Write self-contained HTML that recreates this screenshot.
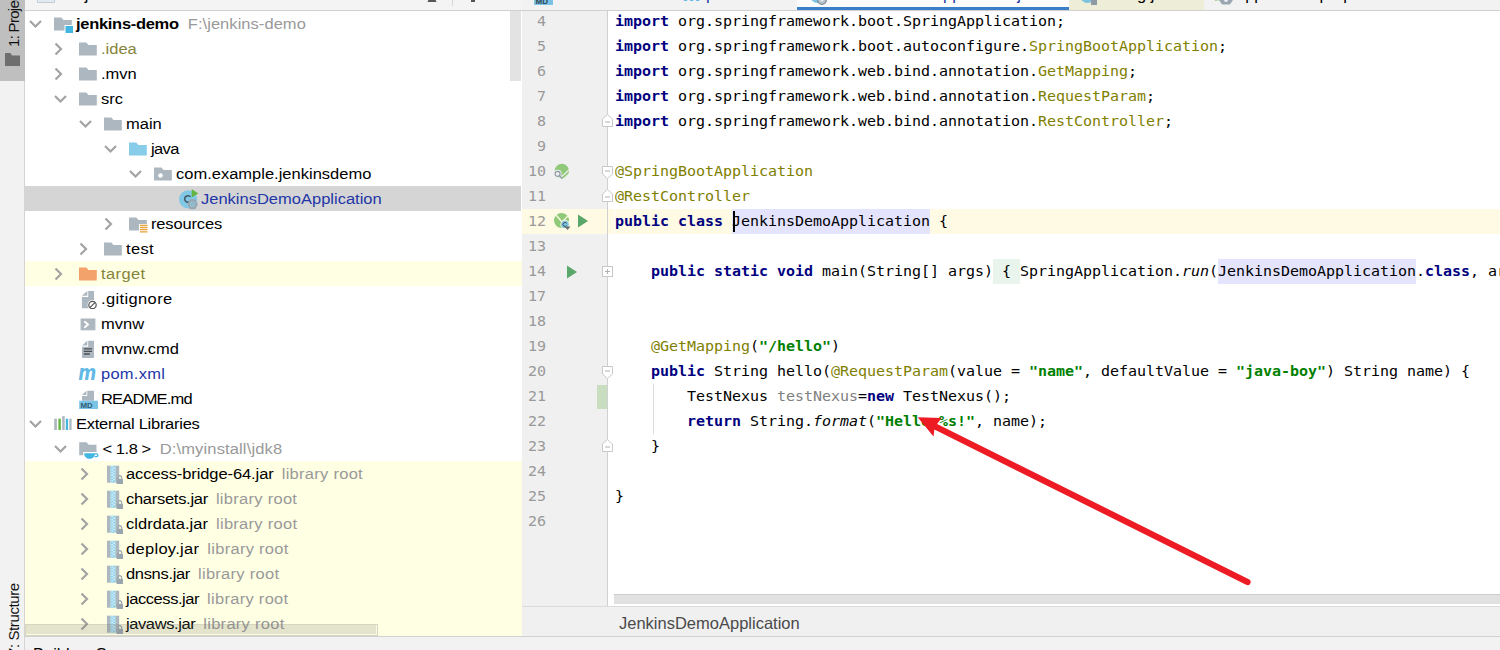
<!DOCTYPE html>
<html><head><meta charset="utf-8"><title>jenkins-demo</title>
<style>
html,body{margin:0;padding:0}
body{width:1500px;height:650px;overflow:hidden;position:relative;background:#f2f2f2;font-family:"Liberation Sans","Noto Sans CJK SC",sans-serif;font-size:16.5px;color:#000}
div,span{box-sizing:border-box}
#strip{position:absolute;left:0;top:0;width:25px;height:650px;background:#f2f2f2;border-right:1px solid #d4d4d4}
#strip .on{position:absolute;left:0;top:0;width:25px;height:81px;background:#bfbfbf}
.vt{position:absolute;transform-origin:0 0;transform:rotate(-90deg);white-space:nowrap;font-size:15px;line-height:24px;height:24px;color:#111}
#tree{position:absolute;left:25px;top:0;width:497px;height:637px;background:#fff;overflow:hidden}
#treehead{position:absolute;left:0;top:0;width:498px;height:11px;background:#f4f4f4;border-bottom:1px solid #d0d0d0}
.row{position:absolute;left:0;width:496px;height:25px;white-space:nowrap}
.row.sel{background:#d5d5d5}
.row.ex{background:#ffffe4;width:497px}
.row.lib{background:#ffffe4;width:497px}
.row span.a,.row span.i,.row span.t{position:absolute;top:0;height:25px;line-height:25px}
.row span.t{transform:scaleY(0.930);transform-origin:0 18px}
.row span.a svg,.row span.i svg{position:absolute;left:0;top:50%;transform:translateY(-50%)}
.g{color:#999}
.ol{color:#84843c}
.bl{color:#2236a8}
#editor{position:absolute;left:522px;top:0;width:978px;height:637px;background:#fff;overflow:hidden}
#tabs{position:absolute;left:522px;top:0;width:978px;height:11px;background:#f2f2f2;border-bottom:1px solid #d0d0d0;z-index:3}
#gutter{position:absolute;left:0;top:10px;width:86px;height:596px;background:#f0f0f0;border-right:1px solid #d0d0d0}
.ln{position:absolute;left:522px;width:85px;height:25px;line-height:25px;font-family:"DejaVu Sans Mono","Liberation Mono",monospace;font-size:15px;color:#999}
.ln span{position:absolute;right:61px;transform:scaleY(0.900);transform-origin:0 17px}
.cl .tx{display:block;transform:scaleY(0.900);transform-origin:0 17px}
.bg{position:absolute;height:25px}
.ln.cur{background:#fffae3}
.cl{position:absolute;left:608px;width:892px;height:25px;line-height:25px;padding-left:7px;white-space:pre;font-family:"DejaVu Sans Mono","Liberation Mono",monospace;font-size:15px;letter-spacing:-0.031px;color:#000;overflow:hidden}
.cl.cur{background:#fffae3}
.cl.cur ~ .cl.cur{background:transparent}
.k{color:#000080;font-weight:bold}
.an{color:#808000}
.s{color:#008000;font-weight:bold}
.un{color:#808080}
.hl{background:#e4e4ff;display:inline-block;height:25px}
.fold{background:#e9f5ec;display:inline-block;height:25px}
.fd{position:absolute}
.tab{position:absolute;top:-15.900px;height:20px;line-height:20px;white-space:nowrap;font-size:16.500px}
#tabs{overflow:hidden}
#hscroll{position:absolute;left:614px;top:594px;width:886px;height:10px;background:#e1e1e1;border-top:1px solid #cdcdcd}
#crumbs{position:absolute;left:522px;top:606px;width:978px;height:31px;background:#f0f0f0;border-top:1px solid #dcdcdc;border-bottom:1px solid #d1d1d1;line-height:32px;font-size:16.500px;color:#4a4a4a}
#bottom{position:absolute;left:25px;top:637px;width:1475px;height:13px;background:#f2f2f2;overflow:hidden}
</style></head><body>
<div id="strip"><div class="on"></div>
<div class="vt" style="left:2px;top:47px;letter-spacing:-0.700px">1: Project</div>
<svg style="position:absolute;left:5px;top:52px" width="15" height="14" viewBox="0 0 15 14"><path d="M0 1h5.500l1.500 2.500H15V14H0z" fill="#6e6e6e"/></svg>
<div class="vt" style="left:1.500px;top:655.500px;letter-spacing:-0.400px">7: Structure</div>
</div>
<div id="tree">
<div class="row " style="top:11px"><span class="a" style="left:3.5px"><svg class="ar" width="13" height="9" viewBox="0 0 13 9"><path d="M1 1.500l5.500 5.500 5.500-5.500" fill="none" stroke="#a3a3a3" stroke-width="2.200"/></svg></span><span class="i" style="left:28px"><svg class="ic" width="20" height="18" viewBox="0 0 20 18"><path d="M1 2.500h7.300l2.200 2.500H18.800v10.500H1z" fill="#adb7bf"/><rect x="11.500" y="10" width="8.500" height="8" fill="#fff"/><rect x="12.500" y="11" width="7.500" height="7" fill="#40b6e0"/></svg></span><span class="t" style="left:51px"><b style="letter-spacing:-0.300px">jenkins-demo</b><span class="g" style="margin-left:9px;letter-spacing:0.050px">F:\jenkins-demo</span></span></div>
<div class="row " style="top:36px"><span class="a" style="left:28px"><svg class="ar" width="12" height="13" viewBox="0 0 12 13"><path d="M2.500 1l5.500 5.500-5.500 5.500" fill="none" stroke="#a3a3a3" stroke-width="2.200"/></svg></span><span class="i" style="left:53px"><svg class="ic" width="20" height="18" viewBox="0 0 20 18"><path d="M1 2.500h7.300l2.200 2.500H18.800v10.500H1z" fill="#adb7bf"/></svg></span><span class="t" style="left:76px"><span class="ol">.idea</span></span></div>
<div class="row " style="top:61px"><span class="a" style="left:28px"><svg class="ar" width="12" height="13" viewBox="0 0 12 13"><path d="M2.500 1l5.500 5.500-5.500 5.500" fill="none" stroke="#a3a3a3" stroke-width="2.200"/></svg></span><span class="i" style="left:53px"><svg class="ic" width="20" height="18" viewBox="0 0 20 18"><path d="M1 2.500h7.300l2.200 2.500H18.800v10.500H1z" fill="#adb7bf"/></svg></span><span class="t" style="left:76px">.mvn</span></div>
<div class="row " style="top:86px"><span class="a" style="left:28.5px"><svg class="ar" width="13" height="9" viewBox="0 0 13 9"><path d="M1 1.500l5.500 5.500 5.500-5.500" fill="none" stroke="#a3a3a3" stroke-width="2.200"/></svg></span><span class="i" style="left:53px"><svg class="ic" width="20" height="18" viewBox="0 0 20 18"><path d="M1 2.500h7.300l2.200 2.500H18.800v10.500H1z" fill="#adb7bf"/></svg></span><span class="t" style="left:76px">src</span></div>
<div class="row " style="top:111px"><span class="a" style="left:53.5px"><svg class="ar" width="13" height="9" viewBox="0 0 13 9"><path d="M1 1.500l5.500 5.500 5.500-5.500" fill="none" stroke="#a3a3a3" stroke-width="2.200"/></svg></span><span class="i" style="left:78px"><svg class="ic" width="20" height="18" viewBox="0 0 20 18"><path d="M1 2.500h7.300l2.200 2.500H18.800v10.500H1z" fill="#adb7bf"/></svg></span><span class="t" style="left:101px">main</span></div>
<div class="row " style="top:136px"><span class="a" style="left:78.5px"><svg class="ar" width="13" height="9" viewBox="0 0 13 9"><path d="M1 1.500l5.500 5.500 5.500-5.500" fill="none" stroke="#a3a3a3" stroke-width="2.200"/></svg></span><span class="i" style="left:103px"><svg class="ic" width="20" height="18" viewBox="0 0 20 18"><path d="M1 2.500h7.300l2.200 2.500H18.800v10.500H1z" fill="#87cde9"/></svg></span><span class="t" style="left:126px"><span style="letter-spacing:-0.650px">java</span></span></div>
<div class="row " style="top:161px"><span class="a" style="left:103.5px"><svg class="ar" width="13" height="9" viewBox="0 0 13 9"><path d="M1 1.500l5.500 5.500 5.500-5.500" fill="none" stroke="#a3a3a3" stroke-width="2.200"/></svg></span><span class="i" style="left:128px"><svg class="ic" width="20" height="18" viewBox="0 0 20 18"><path d="M1 2.500h7.300l2.200 2.500H18.800v10.500H1z" fill="#adb7bf"/><circle cx="7.500" cy="10.500" r="2.300" fill="#fff"/></svg></span><span class="t" style="left:151px">com.example.jenkinsdemo</span></div>
<div class="row sel" style="top:186px"><span class="i" style="left:154px"><svg class="ic" width="20" height="22" viewBox="0 0 20 22"><circle cx="9.1" cy="11.4" r="9.1" fill="#80c8e6"/><path d="M11.53 8.88A3.3 3.3 0 1 0 11.53 13.12" fill="none" stroke="#3f5661" stroke-width="1.5"/><path d="M12.7 1L19.3 5.6L12.7 9.6z" fill="#62b543"/><path d="M8.3 16.3L10.95 11.35H16.25L18.9 16.3L16.25 21.25H10.95z" fill="#9aa7b0"/><circle cx="13.6" cy="16.3" r="2.8" fill="#8ec9e2"/><path d="M12.5 15.3a1.600 1.600 0 1 0 2.200 0" fill="none" stroke="#9aa7b0" stroke-width="1"/><path d="M13.6 14.200v2" stroke="#9aa7b0" stroke-width="1"/></svg></span><span class="t" style="left:176px"><span class="bl">JenkinsDemoApplication</span></span></div>
<div class="row " style="top:211px"><span class="a" style="left:78px"><svg class="ar" width="12" height="13" viewBox="0 0 12 13"><path d="M2.500 1l5.500 5.500-5.500 5.500" fill="none" stroke="#a3a3a3" stroke-width="2.200"/></svg></span><span class="i" style="left:103px"><svg class="ic" width="20" height="18" viewBox="0 0 20 18"><path d="M1 2.500h7.300l2.200 2.500H18.800v10.500H1z" fill="#adb7bf"/><rect x="11" y="9" width="9" height="9" fill="#fff"/><path d="M12 10.300h7.500M12 12.500h7.500M12 14.700h7.500M12 16.900h7.500" stroke="#e8a33d" stroke-width="1.300"/></svg></span><span class="t" style="left:126px"><span style="letter-spacing:-0.160px">resources</span></span></div>
<div class="row " style="top:236px"><span class="a" style="left:53px"><svg class="ar" width="12" height="13" viewBox="0 0 12 13"><path d="M2.500 1l5.500 5.500-5.500 5.500" fill="none" stroke="#a3a3a3" stroke-width="2.200"/></svg></span><span class="i" style="left:78px"><svg class="ic" width="20" height="18" viewBox="0 0 20 18"><path d="M1 2.500h7.300l2.200 2.500H18.800v10.500H1z" fill="#adb7bf"/></svg></span><span class="t" style="left:101px"><span style="letter-spacing:0.370px">test</span></span></div>
<div class="row ex" style="top:261px"><span class="a" style="left:28px"><svg class="ar" width="12" height="13" viewBox="0 0 12 13"><path d="M2.500 1l5.500 5.500-5.500 5.500" fill="none" stroke="#a3a3a3" stroke-width="2.200"/></svg></span><span class="i" style="left:53px"><svg class="ic" width="20" height="18" viewBox="0 0 20 18"><path d="M1 2.500h7.300l2.200 2.500H18.800v10.500H1z" fill="#f4a26b"/></svg></span><span class="t" style="left:76px"><span class="ol" style="letter-spacing:0.400px">target</span></span></div>
<div class="row " style="top:286px"><span class="i" style="left:54px"><svg class="ic" width="20" height="20" viewBox="0 0 20 20"><path d="M9.2 1.9H15V19.2H2.9V7.9H9.2z" fill="#adb7bf"/><path d="M2.9 6.7L8.3 1.9V6.7z" fill="#adb7bf"/><circle cx="13.500" cy="16" r="5" fill="#fff"/><circle cx="13.500" cy="16" r="3.700" fill="#fff" stroke="#555" stroke-width="1.200"/><path d="M10.900 18.600l5.200-5.200" stroke="#555" stroke-width="1.200"/></svg></span><span class="t" style="left:76px"><span style="letter-spacing:0.370px">.gitignore</span></span></div>
<div class="row " style="top:311px"><span class="i" style="left:54px"><svg class="ic" width="20" height="20" viewBox="0 0 20 20"><rect x="1.600" y="4.500" width="14.800" height="11.800" fill="#adb7bf"/><path d="M5.300 7.300l3.700 3.200-3.700 3.200" fill="none" stroke="#fff" stroke-width="1.900"/></svg></span><span class="t" style="left:76px">mvnw</span></div>
<div class="row " style="top:336px"><span class="i" style="left:54px"><svg class="ic" width="20" height="20" viewBox="0 0 20 20"><path d="M9.2 1.7H15V19H3V7.7H9.2z" fill="#adb7bf"/><path d="M3 6.5L8.3 1.7V6.5z" fill="#adb7bf"/><path d="M4.800 9.800h8.200M4.800 12.400h8.200M4.800 15h6" stroke="#4a4f54" stroke-width="1.300"/></svg></span><span class="t" style="left:76px">mvnw.cmd</span></div>
<div class="row " style="top:361px"><span class="i" style="left:53px"><svg class="ic" width="22" height="20" viewBox="0 0 22 20"><text x="0.300" y="16.300" textLength="18" lengthAdjust="spacingAndGlyphs" font-family="DejaVu Sans, Liberation Sans, sans-serif" font-weight="bold" font-style="italic" font-size="21" fill="#62b9e6">m</text></svg></span><span class="t" style="left:76px"><span class="bl" style="letter-spacing:0.250px">pom.xml</span></span></div>
<div class="row " style="top:386px"><span class="i" style="left:53px"><svg class="ic" width="20" height="20" viewBox="0 0 20 20"><path d="M9.3 1.7H16V11.7H4V6.9H9.3z" fill="#adb7bf"/><path d="M4 5.9L8.400 1.7V5.9z" fill="#adb7bf"/><rect x="1.200" y="11.700" width="18.800" height="8.500" fill="#7cc3e8"/><text x="2.600" y="18.800" font-family="Liberation Sans, sans-serif" font-weight="bold" font-size="7.800" fill="#2f5d73">MD</text></svg></span><span class="t" style="left:76px"><span style="letter-spacing:-0.800px">README.md</span></span></div>
<div class="row " style="top:411px"><span class="a" style="left:3.5px"><svg class="ar" width="13" height="9" viewBox="0 0 13 9"><path d="M1 1.500l5.500 5.500 5.500-5.500" fill="none" stroke="#a3a3a3" stroke-width="2.200"/></svg></span><span class="i" style="left:28px"><svg class="ic" width="20" height="18" viewBox="0 0 20 18"><rect x="1.200" y="3.700" width="2.700" height="11.300" fill="#adb7bf"/><rect x="5.400" y="3.700" width="2.400" height="11.300" fill="#62b543"/><rect x="9.200" y="1.100" width="2.500" height="13.900" fill="#adb7bf"/><rect x="12.800" y="3.700" width="2.300" height="11.300" fill="#40b6e0"/><rect x="16.300" y="3.700" width="2.300" height="11.300" fill="#adb7bf"/></svg></span><span class="t" style="left:51px"><span style="letter-spacing:-0.270px">External Libraries</span></span></div>
<div class="row " style="top:436px"><span class="a" style="left:28.5px"><svg class="ar" width="13" height="9" viewBox="0 0 13 9"><path d="M1 1.500l5.500 5.500 5.500-5.500" fill="none" stroke="#a3a3a3" stroke-width="2.200"/></svg></span><span class="i" style="left:53px"><svg class="ic" width="22" height="25" viewBox="0 0 22 25"><path d="M1.200 5.800h7.300l2.200 2.500h7.800v10.500H1.200z" fill="#adb7bf"/><path d="M5.200 15.500h15.800v8h-15.800z" fill="#fff"/><path d="M6.200 16.700h10.800c0 3.600-2.400 5.500-5.400 5.500s-5.400-1.900-5.400-5.500z" fill="#40b6e0"/><path d="M16.800 17.400h1.700a1.400 1.400 0 0 1 0 2.800h-2" fill="none" stroke="#40b6e0" stroke-width="1.300"/></svg></span><span class="t" style="left:76px"><span style="letter-spacing:-0.450px;margin-left:1.500px">&lt; 1.8 &gt;</span><span class="g" style="margin-left:9px;letter-spacing:0.140px">D:\myinstall\jdk8</span></span></div>
<div class="row lib" style="top:461px"><span class="a" style="left:53.5px"><svg class="ar" width="12" height="13" viewBox="0 0 12 13"><path d="M2.500 1l5.500 5.500-5.500 5.500" fill="none" stroke="#a3a3a3" stroke-width="2.200"/></svg></span><span class="i" style="left:79px"><svg class="ic" width="20" height="20" viewBox="0 0 20 20"><rect x="3" y="1.700" width="3.600" height="17" fill="#adb7bf"/><rect x="6.600" y="1.700" width="5" height="17" fill="#8ed1ec"/><path d="M7.300 2.200h1.800v1.400H7.300zM9.100 3.600h1.800V5H9.100zM7.300 5h1.800v1.400H7.300zM9.100 6.400h1.800v1.400H9.100zM7.300 7.800h1.800v1.400H7.300zM9.100 9.200h1.800v1.400H9.100zM7.300 10.600h1.800V12H7.300zM9.100 12h1.800v1.400H9.100zM7.300 13.400h1.800v1.400H7.300zM9.100 14.800h1.800v1.400H9.100zM7.300 16.200h1.800v1.400H7.300z" fill="#d4eef8"/><rect x="11.600" y="1.700" width="3.600" height="17" fill="#adb7bf"/><rect x="12.600" y="14.800" width="6.400" height="5.200" fill="#9aa6af"/><path d="M14 14.800v-1.300a1.800 1.800 0 0 1 3.600 0v1.300" fill="none" stroke="#9aa6af" stroke-width="1.200"/></svg></span><span class="t" style="left:101px"><span style="letter-spacing:-0.09px">access-bridge-64.jar</span><span class="g" style="margin-left:8px;letter-spacing:0.280px">library root</span></span></div>
<div class="row lib" style="top:486px"><span class="a" style="left:53.5px"><svg class="ar" width="12" height="13" viewBox="0 0 12 13"><path d="M2.500 1l5.500 5.500-5.500 5.500" fill="none" stroke="#a3a3a3" stroke-width="2.200"/></svg></span><span class="i" style="left:79px"><svg class="ic" width="20" height="20" viewBox="0 0 20 20"><rect x="3" y="1.700" width="3.600" height="17" fill="#adb7bf"/><rect x="6.600" y="1.700" width="5" height="17" fill="#8ed1ec"/><path d="M7.300 2.200h1.800v1.400H7.300zM9.100 3.600h1.800V5H9.100zM7.300 5h1.800v1.400H7.300zM9.100 6.400h1.800v1.400H9.100zM7.300 7.800h1.800v1.400H7.300zM9.100 9.200h1.800v1.400H9.100zM7.300 10.600h1.800V12H7.300zM9.100 12h1.800v1.400H9.100zM7.300 13.400h1.800v1.400H7.300zM9.100 14.800h1.800v1.400H9.100zM7.300 16.200h1.800v1.400H7.300z" fill="#d4eef8"/><rect x="11.600" y="1.700" width="3.600" height="17" fill="#adb7bf"/><rect x="12.600" y="14.800" width="6.400" height="5.200" fill="#9aa6af"/><path d="M14 14.800v-1.300a1.800 1.800 0 0 1 3.600 0v1.300" fill="none" stroke="#9aa6af" stroke-width="1.200"/></svg></span><span class="t" style="left:101px"><span style="letter-spacing:-0.28px">charsets.jar</span><span class="g" style="margin-left:8px;letter-spacing:0.280px">library root</span></span></div>
<div class="row lib" style="top:511px"><span class="a" style="left:53.5px"><svg class="ar" width="12" height="13" viewBox="0 0 12 13"><path d="M2.500 1l5.500 5.500-5.500 5.500" fill="none" stroke="#a3a3a3" stroke-width="2.200"/></svg></span><span class="i" style="left:79px"><svg class="ic" width="20" height="20" viewBox="0 0 20 20"><rect x="3" y="1.700" width="3.600" height="17" fill="#adb7bf"/><rect x="6.600" y="1.700" width="5" height="17" fill="#8ed1ec"/><path d="M7.300 2.200h1.800v1.400H7.300zM9.100 3.600h1.800V5H9.100zM7.300 5h1.800v1.400H7.300zM9.100 6.400h1.800v1.400H9.100zM7.300 7.800h1.800v1.400H7.300zM9.100 9.200h1.800v1.400H9.100zM7.300 10.600h1.800V12H7.300zM9.100 12h1.800v1.400H9.100zM7.300 13.400h1.800v1.400H7.300zM9.100 14.800h1.800v1.400H9.100zM7.300 16.200h1.800v1.400H7.300z" fill="#d4eef8"/><rect x="11.600" y="1.700" width="3.600" height="17" fill="#adb7bf"/><rect x="12.600" y="14.800" width="6.400" height="5.200" fill="#9aa6af"/><path d="M14 14.800v-1.300a1.800 1.800 0 0 1 3.600 0v1.300" fill="none" stroke="#9aa6af" stroke-width="1.200"/></svg></span><span class="t" style="left:101px"><span style="letter-spacing:0.03px">cldrdata.jar</span><span class="g" style="margin-left:8px;letter-spacing:0.280px">library root</span></span></div>
<div class="row lib" style="top:536px"><span class="a" style="left:53.5px"><svg class="ar" width="12" height="13" viewBox="0 0 12 13"><path d="M2.500 1l5.500 5.500-5.500 5.500" fill="none" stroke="#a3a3a3" stroke-width="2.200"/></svg></span><span class="i" style="left:79px"><svg class="ic" width="20" height="20" viewBox="0 0 20 20"><rect x="3" y="1.700" width="3.600" height="17" fill="#adb7bf"/><rect x="6.600" y="1.700" width="5" height="17" fill="#8ed1ec"/><path d="M7.300 2.200h1.800v1.400H7.300zM9.100 3.600h1.800V5H9.100zM7.300 5h1.800v1.400H7.300zM9.100 6.400h1.800v1.400H9.100zM7.300 7.800h1.800v1.400H7.300zM9.100 9.200h1.800v1.400H9.100zM7.300 10.600h1.800V12H7.300zM9.100 12h1.800v1.400H9.100zM7.300 13.400h1.800v1.400H7.300zM9.100 14.800h1.800v1.400H9.100zM7.300 16.200h1.800v1.400H7.300z" fill="#d4eef8"/><rect x="11.600" y="1.700" width="3.600" height="17" fill="#adb7bf"/><rect x="12.600" y="14.800" width="6.400" height="5.200" fill="#9aa6af"/><path d="M14 14.800v-1.300a1.800 1.800 0 0 1 3.600 0v1.300" fill="none" stroke="#9aa6af" stroke-width="1.200"/></svg></span><span class="t" style="left:101px"><span style="letter-spacing:0.3px">deploy.jar</span><span class="g" style="margin-left:8px;letter-spacing:0.280px">library root</span></span></div>
<div class="row lib" style="top:561px"><span class="a" style="left:53.5px"><svg class="ar" width="12" height="13" viewBox="0 0 12 13"><path d="M2.500 1l5.500 5.500-5.500 5.500" fill="none" stroke="#a3a3a3" stroke-width="2.200"/></svg></span><span class="i" style="left:79px"><svg class="ic" width="20" height="20" viewBox="0 0 20 20"><rect x="3" y="1.700" width="3.600" height="17" fill="#adb7bf"/><rect x="6.600" y="1.700" width="5" height="17" fill="#8ed1ec"/><path d="M7.300 2.200h1.800v1.400H7.300zM9.100 3.600h1.800V5H9.100zM7.300 5h1.800v1.400H7.300zM9.100 6.400h1.800v1.400H9.100zM7.300 7.800h1.800v1.400H7.300zM9.100 9.200h1.800v1.400H9.100zM7.300 10.600h1.800V12H7.300zM9.100 12h1.800v1.400H9.100zM7.300 13.400h1.800v1.400H7.300zM9.100 14.800h1.800v1.400H9.100zM7.300 16.200h1.800v1.400H7.300z" fill="#d4eef8"/><rect x="11.600" y="1.700" width="3.600" height="17" fill="#adb7bf"/><rect x="12.600" y="14.800" width="6.400" height="5.200" fill="#9aa6af"/><path d="M14 14.800v-1.300a1.800 1.800 0 0 1 3.600 0v1.300" fill="none" stroke="#9aa6af" stroke-width="1.200"/></svg></span><span class="t" style="left:101px"><span style="letter-spacing:-0.33px">dnsns.jar</span><span class="g" style="margin-left:8px;letter-spacing:0.280px">library root</span></span></div>
<div class="row lib" style="top:586px"><span class="a" style="left:53.5px"><svg class="ar" width="12" height="13" viewBox="0 0 12 13"><path d="M2.500 1l5.500 5.500-5.500 5.500" fill="none" stroke="#a3a3a3" stroke-width="2.200"/></svg></span><span class="i" style="left:79px"><svg class="ic" width="20" height="20" viewBox="0 0 20 20"><rect x="3" y="1.700" width="3.600" height="17" fill="#adb7bf"/><rect x="6.600" y="1.700" width="5" height="17" fill="#8ed1ec"/><path d="M7.300 2.200h1.800v1.400H7.300zM9.100 3.600h1.800V5H9.100zM7.300 5h1.800v1.400H7.300zM9.100 6.400h1.800v1.400H9.100zM7.300 7.800h1.800v1.400H7.300zM9.100 9.200h1.800v1.400H9.100zM7.300 10.600h1.800V12H7.300zM9.100 12h1.800v1.400H9.100zM7.300 13.400h1.800v1.400H7.300zM9.100 14.800h1.800v1.400H9.100zM7.300 16.200h1.800v1.400H7.300z" fill="#d4eef8"/><rect x="11.600" y="1.700" width="3.600" height="17" fill="#adb7bf"/><rect x="12.600" y="14.800" width="6.400" height="5.200" fill="#9aa6af"/><path d="M14 14.800v-1.300a1.800 1.800 0 0 1 3.600 0v1.300" fill="none" stroke="#9aa6af" stroke-width="1.200"/></svg></span><span class="t" style="left:101px"><span style="letter-spacing:-0.44px">jaccess.jar</span><span class="g" style="margin-left:8px;letter-spacing:0.280px">library root</span></span></div>
<div class="row lib" style="top:611px"><span class="a" style="left:53.5px"><svg class="ar" width="12" height="13" viewBox="0 0 12 13"><path d="M2.500 1l5.500 5.500-5.500 5.500" fill="none" stroke="#a3a3a3" stroke-width="2.200"/></svg></span><span class="i" style="left:79px"><svg class="ic" width="20" height="20" viewBox="0 0 20 20"><rect x="3" y="1.700" width="3.600" height="17" fill="#adb7bf"/><rect x="6.600" y="1.700" width="5" height="17" fill="#8ed1ec"/><path d="M7.300 2.200h1.800v1.400H7.300zM9.100 3.600h1.800V5H9.100zM7.300 5h1.800v1.400H7.300zM9.100 6.400h1.800v1.400H9.100zM7.300 7.800h1.800v1.400H7.300zM9.100 9.200h1.800v1.400H9.100zM7.300 10.600h1.800V12H7.300zM9.100 12h1.800v1.400H9.100zM7.300 13.400h1.800v1.400H7.300zM9.100 14.800h1.800v1.400H9.100zM7.300 16.200h1.800v1.400H7.300z" fill="#d4eef8"/><rect x="11.600" y="1.700" width="3.600" height="17" fill="#adb7bf"/><rect x="12.600" y="14.800" width="6.400" height="5.200" fill="#9aa6af"/><path d="M14 14.800v-1.300a1.800 1.800 0 0 1 3.600 0v1.300" fill="none" stroke="#9aa6af" stroke-width="1.200"/></svg></span><span class="t" style="left:101px"><span style="letter-spacing:-0.41px">javaws.jar</span><span class="g" style="margin-left:8px;letter-spacing:0.280px">library root</span></span></div>
<div id="treehead"></div>
<div id="vthumb" style="position:absolute;left:484.500px;top:11px;width:11px;height:69.500px;background:#e3e3e3"></div>
<div id="hthumb" style="position:absolute;left:0;top:624px;width:353px;height:12px;background:rgba(120,120,110,0.200);border:1px solid rgba(120,120,100,0.120);box-shadow:inset -1px -1px 0 rgba(255,255,240,0.800)"></div>
</div>
<div id="editor">
<div id="gutter"></div>
</div>
<div class="ln" style="top:9px"><span class="tx">4</span></div>
<div class="ln" style="top:34px"><span class="tx">5</span></div>
<div class="ln" style="top:59px"><span class="tx">6</span></div>
<div class="ln" style="top:84px"><span class="tx">7</span></div>
<div class="ln" style="top:109px"><span class="tx">8</span></div>
<div class="ln" style="top:134px"><span class="tx">9</span></div>
<div class="ln" style="top:159px"><span class="tx">10</span></div>
<div class="ln" style="top:184px"><span class="tx">11</span></div>
<div class="ln cur" style="top:209px"><span class="tx">12</span></div>
<div class="ln" style="top:234px"><span class="tx">13</span></div>
<div class="ln" style="top:259px"><span class="tx">14</span></div>
<div class="ln" style="top:284px"><span class="tx">17</span></div>
<div class="ln" style="top:309px"><span class="tx">18</span></div>
<div class="ln" style="top:334px"><span class="tx">19</span></div>
<div class="ln" style="top:359px"><span class="tx">20</span></div>
<div class="ln" style="top:384px"><span class="tx">21</span></div>
<div class="ln" style="top:409px"><span class="tx">22</span></div>
<div class="ln" style="top:434px"><span class="tx">23</span></div>
<div class="ln" style="top:459px"><span class="tx">24</span></div>
<div class="ln" style="top:484px"><span class="tx">25</span></div>
<div class="ln" style="top:509px"><span class="tx">26</span></div>
<div class="cl cur" style="top:209px"></div>
<div class="bg" style="left:614px;top:209px;width:1px;background:#fff"></div>
<div class="bg" style="left:732px;top:209px;width:198px;background:#e4e4ff"></div>
<div class="bg" style="left:993px;top:259px;width:27px;background:#e9f5ec"></div>
<div class="bg" style="left:1218px;top:259px;width:198px;background:#e4e4ff"></div>
<div class="cl" style="top:9px"><span class="tx"><span class="k">import</span> org.springframework.boot.SpringApplication;</span></div>
<div class="cl" style="top:34px"><span class="tx"><span class="k">import</span> org.springframework.boot.autoconfigure.<span class="an">SpringBootApplication</span>;</span></div>
<div class="cl" style="top:59px"><span class="tx"><span class="k">import</span> org.springframework.web.bind.annotation.<span class="an">GetMapping</span>;</span></div>
<div class="cl" style="top:84px"><span class="tx"><span class="k">import</span> org.springframework.web.bind.annotation.<span class="an">RequestParam</span>;</span></div>
<div class="cl" style="top:109px"><span class="tx"><span class="k">import</span> org.springframework.web.bind.annotation.<span class="an">RestController</span>;</span></div>
<div class="cl" style="top:134px"><span class="tx"></span></div>
<div class="cl" style="top:159px"><span class="tx"><span class="an">@SpringBootApplication</span></span></div>
<div class="cl" style="top:184px"><span class="tx"><span class="an">@RestController</span></span></div>
<div class="cl cur" style="top:209px"><span class="tx"><span class="k">public</span> <span class="k">class</span> JenkinsDemoApplication {</span></div>
<div class="cl" style="top:234px"><span class="tx"></span></div>
<div class="cl" style="top:259px"><span class="tx">    <span class="k">public</span> <span class="k">static</span> <span class="k">void</span> main(String[] args) { SpringApplication.<i>run</i>(JenkinsDemoApplication.<span class="k">class</span>, args); }</span></div>
<div class="cl" style="top:284px"><span class="tx"></span></div>
<div class="cl" style="top:309px"><span class="tx"></span></div>
<div class="cl" style="top:334px"><span class="tx">    <span class="an">@GetMapping</span>(<span class="s">"/hello"</span>)</span></div>
<div class="cl" style="top:359px"><span class="tx">    <span class="k">public</span> String hello(<span class="an">@RequestParam</span>(value = <span class="s">"name"</span>, defaultValue = <span class="s">"java-boy"</span>) String name) {</span></div>
<div class="cl" style="top:384px"><span class="tx">        TestNexus <span class="un">testNexus</span>=<span class="k">new</span> TestNexus();</span></div>
<div class="cl" style="top:409px"><span class="tx">        <span class="k">return</span> String.<i>format</i>(<span class="s">"Hello %s!"</span>, name);</span></div>
<div class="cl" style="top:434px"><span class="tx">    }</span></div>
<div class="cl" style="top:459px"><span class="tx"></span></div>
<div class="cl" style="top:484px"><span class="tx">}</span></div>
<div class="cl" style="top:509px"><span class="tx"></span></div>
<div style="position:absolute;left:597px;top:385px;width:10px;height:24px;background:#c9dec1"></div>
<div style="position:absolute;left:653px;top:384px;width:1px;height:50px;background:#dcdcdc"></div>
<div style="position:absolute;left:733px;top:211px;width:2px;height:21px;background:#000"></div>
<svg class="fd" style="left:602px;top:113.5px" width="11" height="13" viewBox="0 0 11 13"><path d="M0.500 12.500h10v-7.500l-5-4.500-5 4.500z" fill="#fff" stroke="#c8c8c8"/><path d="M3 8h5" stroke="#b0b0b0"/></svg><svg class="fd" style="left:602px;top:166px" width="11" height="13" viewBox="0 0 11 13"><path d="M0.500 0.500h10v7.500l-5 4.500-5-4.500z" fill="#fff" stroke="#c8c8c8"/><path d="M3 5h5" stroke="#b0b0b0"/></svg><svg class="fd" style="left:602px;top:189px" width="11" height="13" viewBox="0 0 11 13"><path d="M0.500 12.500h10v-7.500l-5-4.500-5 4.500z" fill="#fff" stroke="#c8c8c8"/><path d="M3 8h5" stroke="#b0b0b0"/></svg><svg class="fd" style="left:602px;top:265.8px" width="11" height="11" viewBox="0 0 11 11"><rect x="0.500" y="0.500" width="10" height="10" fill="#fff" stroke="#c8c8c8"/><path d="M3 5.500h5M5.500 3v5" stroke="#b0b0b0"/></svg><svg class="fd" style="left:602px;top:365.5px" width="11" height="13" viewBox="0 0 11 13"><path d="M0.500 0.500h10v7.500l-5 4.500-5-4.500z" fill="#fff" stroke="#c8c8c8"/><path d="M3 5h5" stroke="#b0b0b0"/></svg><svg class="fd" style="left:602px;top:439px" width="11" height="13" viewBox="0 0 11 13"><path d="M0.500 12.500h10v-7.500l-5-4.500-5 4.500z" fill="#fff" stroke="#c8c8c8"/><path d="M3 8h5" stroke="#b0b0b0"/></svg><svg class="fd" style="left:553px;top:163px" width="18" height="18" viewBox="0 0 18 18"><circle cx="8.800" cy="8.100" r="7.300" fill="#8fc979"/><path d="M6.500 15.500l9.500-8.500M10 16.500l7-6.500" stroke="#f0f0f0" stroke-width="1.100"/><circle cx="4.600" cy="10.800" r="4" fill="#f0f0f0"/><circle cx="4.600" cy="10.800" r="2.500" fill="none" stroke="#8a97a3" stroke-width="1.200"/><path d="M6.500 12.800l2.800 2.800" stroke="#8a97a3" stroke-width="1.300"/></svg><svg class="fd" style="left:553px;top:212px" width="20" height="20" viewBox="0 0 20 20"><circle cx="8.500" cy="8.500" r="7.500" fill="#8fc979"/><path d="M3 3l6 7M9 10l6-6" stroke="#fffae3" stroke-width="1.300" fill="none"/><circle cx="12" cy="12.500" r="4.600" fill="#fffae3"/><circle cx="12" cy="12.500" r="3.800" fill="#7cc3e0"/><path d="M13.600 11.300a2 2 0 1 0 0 2.400" fill="none" stroke="#3b4a55" stroke-width="1"/><path d="M11.500 14.500h6l-3 3.500z" fill="#6e6e6e"/></svg><svg class="fd" style="left:577px;top:214px" width="12" height="14" viewBox="0 0 12 14"><path d="M1 0.500l10 6.500-10 6.500z" fill="#59a869"/></svg><svg class="fd" style="left:565.5px;top:264.5px" width="12" height="14" viewBox="0 0 12 14"><path d="M1 0.500l10 6.500-10 6.500z" fill="#59a869"/></svg>
<div id="tabs">
 <div style="position:absolute;left:275px;top:0;width:272px;height:7px;background:#fbfbfb"></div>
 <div style="position:absolute;left:275px;top:7px;width:272px;height:4px;background:#3d7ec8"></div>
 <div style="position:absolute;left:547px;top:0;width:135px;height:10px;background:#eeeed8"></div>
 <svg style="position:absolute;left:12px;top:-14px" width="20" height="20" viewBox="0 0 20 20"><rect x="0" y="11" width="19" height="8" fill="#7cc3e8"/><text x="1.500" y="17.500" font-family="'Liberation Sans',sans-serif" font-weight="bold" font-size="8" fill="#2f4550">MD</text></svg>
 <span class="tab" style="left:36px">README.md</span>
 <svg style="position:absolute;left:161px;top:-15.300px" width="22" height="20" viewBox="0 0 22 20"><text x="0.300" y="16.300" textLength="18" lengthAdjust="spacingAndGlyphs" font-family="DejaVu Sans, Liberation Sans, sans-serif" font-weight="bold" font-style="italic" font-size="21" fill="#62b9e6">m</text></svg>
 <span class="tab bl" style="left:184px">pom.xml</span>
 <svg style="position:absolute;left:287px;top:-14px" width="20" height="20" viewBox="0 0 20 20"><circle cx="8.500" cy="9.500" r="7.500" fill="#7cc3e0"/><circle cx="13" cy="14" r="4.300" fill="#b9c4cc" stroke="#7c8a95" stroke-width="1.200"/><circle cx="13" cy="14" r="1.500" fill="#e9eef2"/></svg>
 <span class="tab bl" style="left:310px">JenkinsDemoApplication.java</span>
 <svg style="position:absolute;left:557px;top:-14px" width="20" height="20" viewBox="0 0 20 20"><circle cx="8.500" cy="9.500" r="7.500" fill="#7cc3e0"/><rect x="12" y="11" width="6" height="8" fill="#8e9aa3"/></svg>
 <span class="tab" style="left:581px">String.java</span>
 <svg style="position:absolute;left:692px;top:-14px" width="20" height="20" viewBox="0 0 20 20"><path d="M1 14c3-1 6-1 8 1" stroke="#8fc979" stroke-width="2" fill="none"/><path d="M8 9h8l3 5-3 4.500H8L5 14z" fill="#9aa7b0"/><circle cx="12" cy="14" r="2" fill="#e9eef2"/></svg>
 <span class="tab" style="left:714px">application.properties</span>
</div>
<div id="headbits" style="position:absolute;left:25px;top:0;width:497px;height:10px;overflow:hidden">
 <div style="position:absolute;left:12px;top:-12px;width:18px;height:15px;background:#dfeaf2;border:1.500px solid #c5ccd3;border-radius:1px"></div>
 <span class="tab" style="left:34px;top:-15.900px">Project</span>
 <svg style="position:absolute;left:402px;top:-8px" width="10" height="10" viewBox="0 0 10 10"><path d="M5 0l4.500 10h-9z" fill="#555"/></svg>
 <div style="position:absolute;left:427px;top:0;width:1px;height:6px;background:#d6d6d6"></div>
 <div style="position:absolute;left:446px;top:0;width:4px;height:2px;background:#555"></div>
</div>
<div id="hscroll"></div>
<div id="crumbs"><span style="position:absolute;left:97px">JenkinsDemoApplication</span></div>
<div id="bottom"><span style="position:absolute;left:8px;top:7px;font-size:16.500px;line-height:20px;white-space:nowrap">Build: <span style="margin-left:17px">Sync</span></span></div>
<div style="position:absolute;left:25px;top:636px;width:1475px;height:1px;background:#d1d1d1"></div>
<svg style="position:absolute;left:0;top:0;pointer-events:none" width="1500" height="650" viewBox="0 0 1500 650">
<path d="M917.700 417.300L941.500 418L937.100 423.900L1248.900 579.200A3.100 3.100 0 0 1 1246.100 584.800L934.400 429.500L933.500 436.500Z" fill="#ed1c24"/>
</svg>
</body></html>
